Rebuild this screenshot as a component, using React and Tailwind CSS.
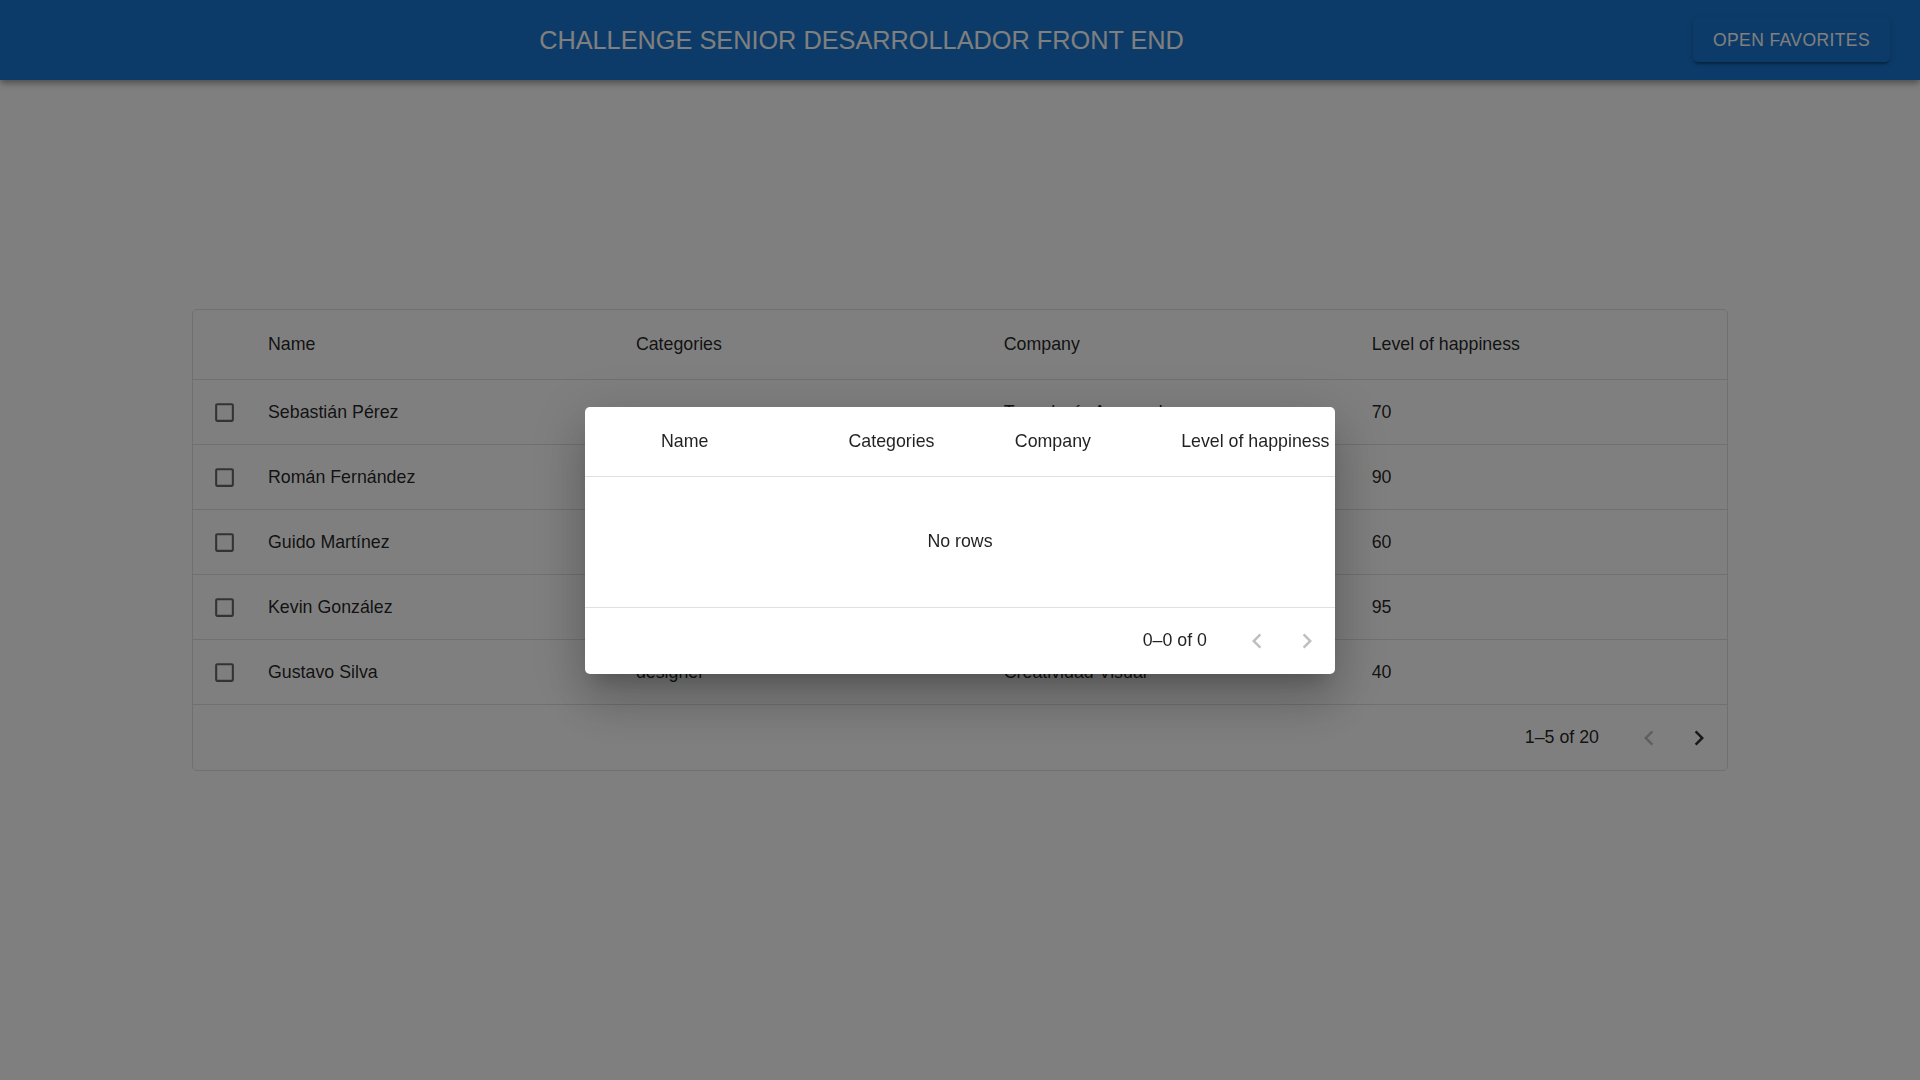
const rows = [
  { id: 1, name: "Sebastián Pérez", category: "programmer", company: "Tecnología Avanzada", happiness: 70 },
  { id: 2, name: "Román Fernández", category: "developer", company: "Soluciones Web", happiness: 90 },
  { id: 3, name: "Guido Martínez", category: "analyst", company: "Datos Globales", happiness: 60 },
  { id: 4, name: "Kevin González", category: "tester", company: "Calidad Total", happiness: 95 },
  { id: 5, name: "Gustavo Silva", category: "designer", company: "Creatividad Visual", happiness: 40 }
];

const columns = ["Name", "Categories", "Company", "Level of happiness"];

function ChevronLeft({ className }) {
  return (
    <svg viewBox="0 0 24 24" className={className} fill="currentColor">
      <path d="M15.41 16.59 10.83 12l4.58-4.59L14 6l-6 6 6 6 1.41-1.41z" />
    </svg>
  );
}

function ChevronRight({ className }) {
  return (
    <svg viewBox="0 0 24 24" className={className} fill="currentColor">
      <path d="M8.59 16.59 13.17 12 8.59 7.41 10 6l6 6-6 6-1.41-1.41z" />
    </svg>
  );
}

function CheckboxBlank() {
  return (
    <svg viewBox="0 0 24 24" className="w-[25px] h-[25px] text-black/60" fill="currentColor">
      <path d="M19 5v14H5V5h14m0-2H5c-1.11 0-2 .9-2 2v14c0 1.1.89 2 2 2h14c1.1 0 2-.9 2-2V5c0-1.1-.9-2-2-2z" />
    </svg>
  );
}

function Pagination({ label, prevDisabled, nextDisabled }) {
  return (
    <div className="flex items-center justify-end pr-[3px] text-black/87">
      <span>{label}</span>
      <div className="flex items-center ml-[25px]">
        <button className={`w-[50px] h-[50px] grid place-items-center ${prevDisabled ? "text-black/25" : "text-black/55"}`}>
          <ChevronLeft className="w-[30px] h-[30px]" />
        </button>
        <button className={`w-[50px] h-[50px] grid place-items-center ${nextDisabled ? "text-black/25" : "text-black/80"}`}>
          <ChevronRight className="w-[30px] h-[30px]" />
        </button>
      </div>
    </div>
  );
}

function MainTable() {
  return (
    <section className="w-[1536px] mx-auto mt-[229px] border border-[#e0e0e0] rounded-[5px] text-[17.8px] text-black/87">
      <div className="flex h-[70px] items-center border-b border-[#e0e0e0]">
        <div className="w-[62.5px] shrink-0" />
        {columns.map((col) => (
          <div key={col} className="flex-1 min-w-0 px-[12.5px] font-medium">
            {col}
          </div>
        ))}
      </div>
      {rows.map((row) => (
        <div key={row.id} className="flex items-center h-[65px] border-b border-[#e0e0e0]">
          <div className="w-[62.5px] shrink-0 grid place-items-center">
            <CheckboxBlank />
          </div>
          <div className="flex-1 min-w-0 px-[12.5px] whitespace-nowrap">{row.name}</div>
          <div className="flex-1 min-w-0 px-[12.5px] whitespace-nowrap">{row.category}</div>
          <div className="flex-1 min-w-0 px-[12.5px] whitespace-nowrap">{row.company}</div>
          <div className="flex-1 min-w-0 px-[12.5px] whitespace-nowrap">{row.happiness}</div>
        </div>
      ))}
      <div className="h-[65px] flex items-center justify-end">
        <Pagination label="1–5 of 20" prevDisabled />
      </div>
    </section>
  );
}

function FavoritesDialog() {
  return (
    <div className="fixed inset-0 bg-black/50 flex items-center justify-center">
      <div className="w-[750px] bg-white rounded-[5px] overflow-hidden text-[17.8px] text-black/87 shadow-[0px_14px_19px_-9px_rgba(0,0,0,0.2),0px_30px_48px_4px_rgba(0,0,0,0.14),0px_11px_58px_10px_rgba(0,0,0,0.12)]">
        <div className="flex h-[70px] items-center border-b border-[#e0e0e0]">
          <div className="w-[63.5px] shrink-0" />
          <div className="w-[187.5px] shrink-0 px-[12.5px] font-medium">Name</div>
          <div className="flex-1 min-w-0 px-[12.5px] font-medium whitespace-nowrap">Categories</div>
          <div className="flex-1 min-w-0 px-[12.5px] font-medium whitespace-nowrap">Company</div>
          <div className="flex-1 min-w-0 px-[12.5px] font-medium whitespace-nowrap">Level of happiness</div>
        </div>
        <div className="h-[131px] flex items-center justify-center border-b border-[#e0e0e0]">
          No rows
        </div>
        <div className="h-[66px] flex items-center justify-end">
          <Pagination label="0–0 of 0" prevDisabled nextDisabled />
        </div>
      </div>
    </div>
  );
}

export default function App() {
  return (
    <div className="min-h-[1080px] bg-white font-['Liberation_Sans',Arial,sans-serif]">
      <header className="h-20 bg-[#1976d2] flex items-center px-[30px] shadow-[0px_3px_5px_-1px_rgba(0,0,0,0.2),0px_5px_6px_0px_rgba(0,0,0,0.14),0px_1px_12px_0px_rgba(0,0,0,0.12)]">
        <h6 className="flex-1 mt-[2px] text-center text-[25.3px] text-white font-medium">
          CHALLENGE SENIOR DESARROLLADOR FRONT END
        </h6>
        <button className="h-[44px] px-[20px] rounded-[5px] bg-[#1976d2] text-white text-[17.5px] tracking-[0.4px] font-medium shadow-[0px_4px_2px_-2px_rgba(0,0,0,0.2),0px_2px_3px_0px_rgba(0,0,0,0.14),0px_1px_6px_0px_rgba(0,0,0,0.12)]">
          OPEN FAVORITES
        </button>
      </header>
      <MainTable />
      <FavoritesDialog />
    </div>
  );
}
